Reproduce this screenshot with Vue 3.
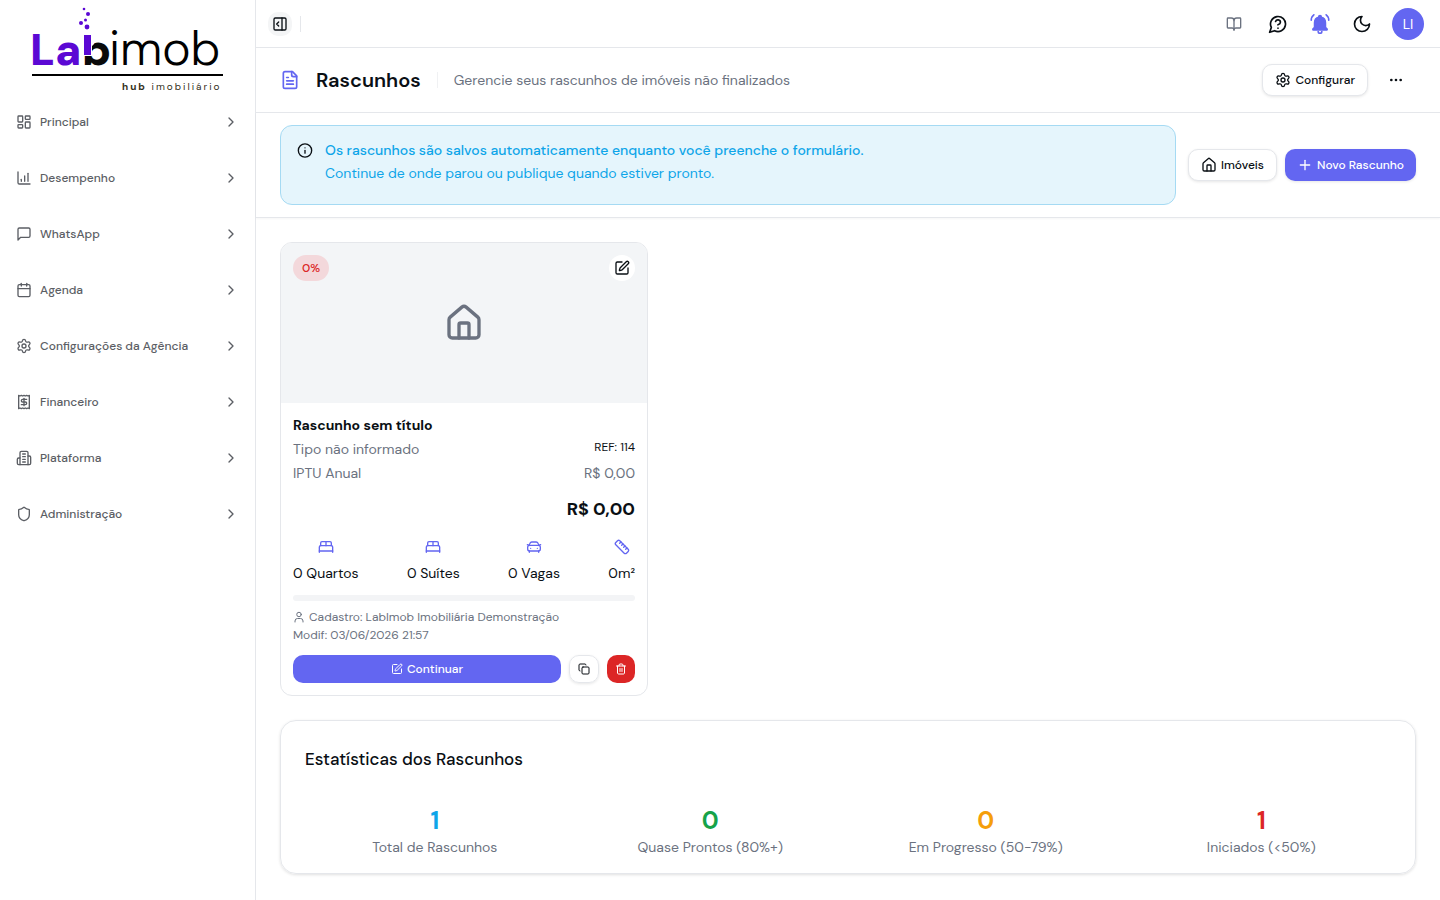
<script setup>
import { h } from 'vue'

const icons = {
  dashboard: '<rect width="7" height="9" x="3" y="3" rx="1"/><rect width="7" height="5" x="14" y="3" rx="1"/><rect width="7" height="9" x="14" y="12" rx="1"/><rect width="7" height="5" x="3" y="16" rx="1"/>',
  chart: '<path d="M3 3v16a2 2 0 0 0 2 2h16"/><path d="M13 17V9"/><path d="M18 17V5"/><path d="M8 17v-3"/>',
  message: '<path d="M21 15a2 2 0 0 1-2 2H7l-4 4V5a2 2 0 0 1 2-2h14a2 2 0 0 1 2 2z"/>',
  calendar: '<path d="M8 2v4"/><path d="M16 2v4"/><rect width="18" height="18" x="3" y="4" rx="2"/><path d="M3 10h18"/>',
  gear: '<path d="M9.671 4.136a2.34 2.34 0 0 1 4.659 0 2.34 2.34 0 0 0 3.319 1.915 2.34 2.34 0 0 1 2.33 4.033 2.34 2.34 0 0 0 0 3.831 2.34 2.34 0 0 1-2.33 4.033 2.34 2.34 0 0 0-3.319 1.915 2.34 2.34 0 0 1-4.659 0 2.34 2.34 0 0 0-3.32-1.915 2.34 2.34 0 0 1-2.33-4.033 2.34 2.34 0 0 0 0-3.831A2.34 2.34 0 0 1 6.35 6.051a2.34 2.34 0 0 0 3.319-1.915"/><circle cx="12" cy="12" r="3"/>',
  receipt: '<path d="M4 2v20l2-1 2 1 2-1 2 1 2-1 2 1 2-1 2 1V2l-2 1-2-1-2 1-2-1-2 1-2-1-2 1Z"/><path d="M16 8h-6a2 2 0 1 0 0 4h4a2 2 0 1 1 0 4H8"/><path d="M12 17.5v-11"/>',
  building: '<path d="M6 22V4a2 2 0 0 1 2-2h8a2 2 0 0 1 2 2v18Z"/><path d="M6 12H4a2 2 0 0 0-2 2v6a2 2 0 0 0 2 2h2"/><path d="M18 9h2a2 2 0 0 1 2 2v9a2 2 0 0 1-2 2h-2"/><path d="M10 6h4"/><path d="M10 10h4"/><path d="M10 14h4"/><path d="M10 18h4"/>',
  shield: '<path d="M20 13c0 5-3.500 7.500-7.660 8.950a1 1 0 0 1-.67-.01C7.500 20.500 4 18 4 13V6a1 1 0 0 1 1-1c2 0 4.500-1.200 6.240-2.720a1.170 1.170 0 0 1 1.520 0C14.510 3.810 17 5 19 5a1 1 0 0 1 1 1z"/>',
  chevron: '<path d="m9 18 6-6-6-6"/>',
  panel: '<rect width="18" height="18" x="3" y="3" rx="2"/><path d="M15 3v18"/><path d="m10 9-3 3 3 3"/>',
  book: '<path d="M12 7v14"/><path d="M3 18a1 1 0 0 1-1-1V4a1 1 0 0 1 1-1h5a4 4 0 0 1 4 4 4 4 0 0 1 4-4h5a1 1 0 0 1 1 1v13a1 1 0 0 1-1 1h-6a3 3 0 0 0-3 3 3 3 0 0 0-3-3z"/>',
  help: '<path d="M7.900 20A9 9 0 1 0 4 16.100L2 22Z"/><path d="M9.090 9a3 3 0 0 1 5.830 1c0 2-3 3-3 3"/><path d="M12 17h.01"/>',
  bell: '<path d="M9.800 21a2.200 2.200 0 0 0 4.400 0"/><path d="M22.500 7.500c0-2.600-1.100-5-3.100-6.500"/><path d="M4.600 1C2.600 2.500 1.500 4.900 1.500 7.500"/><path fill="currentColor" d="M3.500 19h17v-1l-2-2v-5.500c0-3.400-1.800-5.900-5-6.600v-.6a1.500 1.500 0 0 0-3 0v.6c-3.200.7-5 3.200-5 6.600V16l-2 2z"/>',
  moon: '<path d="M12 3a6 6 0 0 0 9 9 9 9 0 1 1-9-9Z"/>',
  file: '<path d="M15 2H6a2 2 0 0 0-2 2v16a2 2 0 0 0 2 2h12a2 2 0 0 0 2-2V7Z"/><path d="M14 2v4a2 2 0 0 0 2 2h4"/><path d="M10 9H8"/><path d="M16 13H8"/><path d="M16 17H8"/>',
  dots: '<circle cx="12" cy="12" r="1"/><circle cx="19" cy="12" r="1"/><circle cx="5" cy="12" r="1"/>',
  info: '<circle cx="12" cy="12" r="10"/><path d="M12 16v-4"/><path d="M12 8h.01"/>',
  house: '<path d="M15 21v-8a1 1 0 0 0-1-1h-4a1 1 0 0 0-1 1v8"/><path d="M3 10a2 2 0 0 1 .709-1.528l7-5.999a2 2 0 0 1 2.582 0l7 5.999A2 2 0 0 1 21 10v9a2 2 0 0 1-2 2H5a2 2 0 0 1-2-2z"/>',
  plus: '<path d="M5 12h14"/><path d="M12 5v14"/>',
  edit: '<path d="M12 3H5a2 2 0 0 0-2 2v14a2 2 0 0 0 2 2h14a2 2 0 0 0 2-2v-7"/><path d="M18.375 2.625a1 1 0 0 1 3 3l-9.013 9.014a2 2 0 0 1-.853.505l-2.873.84a.5.5 0 0 1-.62-.62l.84-2.873a2 2 0 0 1 .506-.852z"/>',
  bed: '<path d="M2 20v-8a2 2 0 0 1 2-2h16a2 2 0 0 1 2 2v8"/><path d="M4 10V6a2 2 0 0 1 2-2h12a2 2 0 0 1 2 2v4"/><path d="M12 4v6"/><path d="M2 18h20"/>',
  car: '<path d="M4.500 9.500 6 6.300A3 3 0 0 1 8.700 4.500h6.600A3 3 0 0 1 18 6.300l1.500 3.200"/><path d="M2 8.500l2.500 1.200M22 8.500l-2.500 1.200"/><path d="M7 14h.01"/><path d="M17 14h.01"/><rect width="19" height="8.500" x="2.500" y="9.500" rx="3"/><path d="M5 18v2"/><path d="M19 18v2"/>',
  ruler: '<path d="M21.300 15.300a2.400 2.400 0 0 1 0 3.400l-2.600 2.600a2.400 2.400 0 0 1-3.400 0L2.700 8.700a2.410 2.410 0 0 1 0-3.400l2.600-2.600a2.410 2.410 0 0 1 3.400 0Z"/><path d="m14.500 12.500 2-2"/><path d="m11.500 9.500 2-2"/><path d="m8.500 6.500 2-2"/><path d="m17.500 15.500 2-2"/>',
  user: '<circle cx="12" cy="7" r="4.500"/><path d="M20 22v-2a5 5 0 0 0-5-5H9a5 5 0 0 0-5 5v2"/>',
  copy: '<rect width="14" height="14" x="8" y="8" rx="2"/><path d="M4 16c-1.100 0-2-.9-2-2V4c0-1.100.9-2 2-2h10c1.100 0 2 .9 2 2"/>',
  trash: '<path d="M3 6h18"/><path d="M19 6v14c0 1-1 2-2 2H7c-1 0-2-1-2-2V6"/><path d="M8 6V4c0-1 1-2 2-2h4c1 0 2 1 2 2v2"/><path d="M10 11v6"/><path d="M14 11v6"/>',
}

const Icon = (props) =>
  h('svg', {
    width: props.size,
    height: props.size,
    viewBox: '0 0 24 24',
    fill: 'none',
    stroke: 'currentColor',
    'stroke-width': 2,
    'stroke-linecap': 'round',
    'stroke-linejoin': 'round',
    'aria-hidden': 'true',
    innerHTML: icons[props.name],
  })
Icon.props = {
  name: String,
  size: { type: Number, default: 16 },
}

const menu = [
  { icon: 'dashboard', label: 'Principal' },
  { icon: 'chart', label: 'Desempenho' },
  { icon: 'message', label: 'WhatsApp' },
  { icon: 'calendar', label: 'Agenda' },
  { icon: 'gear', label: 'Configurações da Agência' },
  { icon: 'receipt', label: 'Financeiro' },
  { icon: 'building', label: 'Plataforma' },
  { icon: 'shield', label: 'Administração' },
]

const features = [
  { icon: 'bed', label: '0 Quartos' },
  { icon: 'bed', label: '0 Suítes' },
  { icon: 'car', label: '0 Vagas' },
  { icon: 'ruler', label: '0m²' },
]

const stats = [
  { value: 1, label: 'Total de Rascunhos', tone: 'blue' },
  { value: 0, label: 'Quase Prontos (80%+)', tone: 'green' },
  { value: 0, label: 'Em Progresso (50-79%)', tone: 'amber' },
  { value: 1, label: 'Iniciados (<50%)', tone: 'red' },
]
</script>

<template>
  <div class="app">
    <aside class="sidebar">
      <a class="logo" href="#" aria-label="Labimob">
        <svg width="200" height="90" viewBox="-4 0 200 90">
          <g fill="#5b08d4">
            <circle cx="52" cy="5" r="1.300" />
            <circle cx="56" cy="10" r="2" />
            <circle cx="53.500" cy="16" r="1.500" />
            <circle cx="49" cy="19" r="2" />
            <circle cx="55" cy="23" r="2.400" />
          </g>
          <text x="-2" y="61" class="logo-bold" fill="#5b08d4">La</text>
          <text x="50" y="61" class="logo-bold" fill="#0a0a0a">b</text>
          <path d="M50 26h12v14l-2 2v10H50z" fill="#fff" />
          <path d="M52 31h7v20h-7z" fill="#5b08d4" />
          <text x="77" y="61" class="logo-thin">imob</text>
          <path d="M0 70h191v2H0z" />
          <text x="90" y="86" class="logo-sub" fill="#33301a"><tspan font-weight="700">hub</tspan> imobiliário</text>
        </svg>
      </a>
      <nav class="menu">
        <button v-for="item in menu" :key="item.label" class="menu-item">
          <Icon :name="item.icon" />
          <span>{{ item.label }}</span>
          <Icon name="chevron" />
        </button>
      </nav>
    </aside>

    <div class="content">
      <header class="topbar">
        <button class="toggle" aria-label="Recolher menu"><Icon name="panel" /></button>
        <span class="rule"></span>
        <div class="actions">
          <button class="icon-btn muted" aria-label="Documentação"><Icon name="book" /></button>
          <button class="icon-btn" aria-label="Ajuda"><Icon name="help" :size="20" /></button>
          <button class="icon-btn accent" aria-label="Notificações"><Icon name="bell" :size="20" /></button>
          <button class="icon-btn" aria-label="Tema escuro"><Icon name="moon" :size="20" /></button>
          <button class="avatar">LI</button>
        </div>
      </header>

      <section class="heading">
        <Icon class="accent" name="file" :size="20" />
        <h1>Rascunhos</h1>
        <span class="rule light"></span>
        <p>Gerencie seus rascunhos de imóveis não finalizados</p>
        <div class="heading-actions">
          <button class="btn"><Icon name="gear" />Configurar</button>
          <button class="more" aria-label="Mais opções"><Icon name="dots" /></button>
        </div>
      </section>

      <section class="notice-row">
        <div class="notice" role="status">
          <Icon name="info" />
          <div>
            <p class="notice-title">Os rascunhos são salvos automaticamente enquanto você preenche o formulário.</p>
            <p>Continue de onde parou ou publique quando estiver pronto.</p>
          </div>
        </div>
        <div class="notice-actions">
          <button class="btn"><Icon name="house" />Imóveis</button>
          <button class="btn primary"><Icon name="plus" />Novo Rascunho</button>
        </div>
      </section>

      <main>
        <div class="cards">
          <article class="card">
            <div class="cover">
              <span class="percent">0%</span>
              <button class="edit" aria-label="Editar"><Icon name="edit" /></button>
              <Icon name="house" :size="40" />
            </div>
            <div class="card-body">
              <h2>Rascunho sem título</h2>
              <div class="line"><span>Tipo não informado</span><span class="ref">REF: 114</span></div>
              <div class="line"><span>IPTU Anual</span><span>R$ 0,00</span></div>
              <p class="price">R$ 0,00</p>
              <ul class="features">
                <li v-for="f in features" :key="f.label"><Icon :name="f.icon" />{{ f.label }}</li>
              </ul>
              <div class="progress"></div>
              <p class="meta"><Icon name="user" :size="12" />Cadastro: LabImob Imobiliária Demonstração</p>
              <p class="meta">Modif: 03/06/2026 21:57</p>
              <div class="card-actions">
                <button class="small primary grow"><Icon name="edit" :size="12" />Continuar</button>
                <button class="small outline" aria-label="Duplicar"><Icon name="copy" :size="12" /></button>
                <button class="small danger" aria-label="Excluir"><Icon name="trash" :size="12" /></button>
              </div>
            </div>
          </article>
        </div>

        <section class="stats">
          <h2>Estatísticas dos Rascunhos</h2>
          <div class="stats-grid">
            <div v-for="s in stats" :key="s.label">
              <strong :class="s.tone">{{ s.value }}</strong>
              <span>{{ s.label }}</span>
            </div>
          </div>
        </section>
      </main>
    </div>
  </div>
</template>

<style>
body { margin: 0; background: #fff; }
</style>

<style scoped>
* { box-sizing: border-box; }
h1, h2, p, ul { margin: 0; padding: 0; }
svg { flex: none; display: block; }
button { font: inherit; color: inherit; border: 0; background: none; padding: 0; cursor: pointer; display: flex; align-items: center; justify-content: center; }
.app { display: flex; min-height: 100vh; font-family: "DM Sans", Inter, "Noto Sans", sans-serif; font-size: 14px; line-height: 20px; color: #0a0f14; }
.sidebar { width: 256px; flex: none; border-right: 1px solid #e5e7eb; }
.logo { display: block; padding: 4px 28px; height: 98px; color: #000; }
.logo-bold { font: 900 44px "DM Sans", Lato, sans-serif; }
.logo-thin { font: 300 48px "DM Sans", Lato, sans-serif; }
.logo-sub { font: 400 10px "DM Sans", Lato, sans-serif; letter-spacing: 2px; }
.menu { display: flex; flex-direction: column; gap: 8px; }
.menu-item { height: 48px; padding: 0 16px; gap: 8px; font-size: 12px; font-weight: 500; color: #5b5e64; }
.menu-item span { flex: 1; text-align: left; }
.content { flex: 1; min-width: 0; }
.topbar { height: 48px; display: flex; align-items: center; gap: 8px; padding: 0 16px 0 12px; border-bottom: 1px solid #e5e7eb; }
.toggle { width: 24px; height: 24px; border-radius: 10px; background: #f4f5f6; }
.rule { width: 1px; height: 16px; background: #e5e7eb; }
.light { background: #f0f1f3; }
.actions { margin-left: auto; display: flex; align-items: center; gap: 10px; }
.icon-btn { width: 32px; height: 32px; }
.muted { width: 36px; color: #6b7280; }
.accent { color: #6366f1; }
.avatar { width: 32px; height: 32px; border-radius: 50%; background: #6366f1; color: #fff; margin-left: 4px; }
.heading { height: 65px; display: flex; align-items: center; gap: 16px; padding: 0 24px; border-bottom: 1px solid #e5e7eb; }
.heading h1 { font-size: 20px; line-height: 28px; font-weight: 600; }
.heading p { color: #6b7280; flex: 1; }
.heading-actions { display: flex; gap: 8px; }
.btn { height: 32px; padding: 0 12px; gap: 4px; border: 1px solid #e5e7eb; border-radius: 10px; font-size: 12px; font-weight: 500; background: #fff; box-shadow: 0 1px 3px rgba(0, 0, 0, .1); white-space: nowrap; }
.more { width: 40px; height: 32px; }
.primary { background: #6366f1; border: 0; color: #fff; }
.notice-row { display: flex; align-items: center; gap: 12px; padding: 12px 24px; border-bottom: 1px solid #e5e7eb; box-shadow: 0 1px 2px rgba(0, 0, 0, .04); }
.notice { flex: 1; min-height: 80px; display: flex; gap: 12px; padding: 13px 16px; background: #e5f5fc; border: 1px solid #a5daf3; border-radius: 12px; color: #0ea5e9; line-height: 23px; }
.notice svg { height: 23px; color: #0a0f14; }
.notice-title { font-weight: 500; }
.notice-actions { display: flex; gap: 8px; }
main { padding: 24px; display: flex; flex-direction: column; gap: 24px; }
.cards { display: grid; grid-template-columns: repeat(3, 1fr); gap: 16px; }
.card { border: 1px solid #e5e7eb; border-radius: 12px; overflow: hidden; }
.cover { position: relative; height: 160px; display: flex; align-items: center; justify-content: center; background: #f3f5f7; color: #6b7280; }
.percent { position: absolute; top: 12px; left: 12px; padding: 0 9px; line-height: 26px; border-radius: 13px; font-size: 12px; font-weight: 500; color: #dc2626; background: #f3d8db; }
.edit { position: absolute; top: 12px; right: 12px; width: 26px; height: 26px; border-radius: 50%; background: #fff; color: #0a0f14; }
.card-body { padding: 12px; }
.card h2 { margin-bottom: 2px; font-size: 14px; line-height: 20px; font-weight: 700; }
.line { display: flex; justify-content: space-between; color: #6b7280; line-height: 24px; }
.ref { font-size: 12px; line-height: 20px; color: #0a0f14; }
.price { margin-top: 10px; font-size: 18px; line-height: 28px; font-weight: 700; text-align: right; }
.features { list-style: none; display: flex; justify-content: space-between; margin-top: 16px; }
.features li { display: flex; flex-direction: column; align-items: center; gap: 8px; }
.features svg { color: #6366f1; }
.progress { height: 6px; border-radius: 3px; background: #f3f4f6; margin: 12px 0 7px; }
.meta { display: flex; align-items: center; gap: 4px; font-size: 12px; line-height: 18px; color: #6b7280; }
.card-actions { display: flex; gap: 8px; margin-top: 11px; }
.small { width: 28px; height: 28px; gap: 4px; border-radius: 10px; font-size: 12px; font-weight: 500; }
.outline { width: 30px; border: 1px solid #e5e7eb; box-shadow: 0 1px 3px rgba(0, 0, 0, .1); }
.grow { flex: 1; }
.danger { background: #dc2626; color: #fff; }
.stats { border: 1px solid #e5e7eb; border-radius: 16px; padding: 24px 24px 16px; box-shadow: 0 1px 3px rgba(0, 0, 0, .12); }
.stats h2 { font-size: 17px; line-height: 28px; font-weight: 500; }
.stats-grid { display: grid; grid-template-columns: repeat(4, 1fr); gap: 16px; margin-top: 32px; text-align: center; }
.stats-grid strong { display: block; font-size: 24px; line-height: 32px; font-weight: 700; }
.stats-grid span { color: #6b7280; }
.blue { color: #0ea5e9; }
.green { color: #16a34a; }
.amber { color: #f59e0b; }
.red { color: #dc2626; }
</style>
